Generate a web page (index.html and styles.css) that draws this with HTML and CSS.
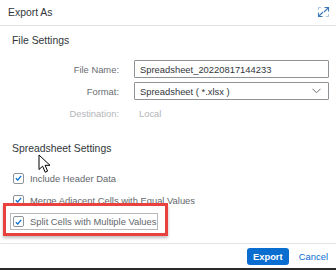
FILE: index.html
```html
<!DOCTYPE html>
<html>
<head>
<meta charset="utf-8">
<link rel="stylesheet" href="styles.css">
</head>
<body>
<div class="dialog">
  <header class="header">
    <span class="title">Export As</span>
    <svg class="expand" width="13" height="12" viewBox="0 0 13 12">
      <path d="M7.5 1.5H11.5V5.5M11.5 1.5L7 6M5.5 10.5H1.5V6.5M1.5 10.5L6 6" fill="none" stroke="#3d79b8" stroke-width="1.1"/>
      <path d="M1.5 4V1.5H4M11.5 8V10.5H9" fill="none" stroke="#3d79b8" stroke-width="0.8" opacity="0.5"/>
    </svg>
  </header>
  <main class="content">
    <h2 class="section">File Settings</h2>
    <div class="form">
      <label class="lbl">File Name:</label>
      <div class="input">Spreadsheet_20220817144233</div>
      <label class="lbl">Format:</label>
      <div class="input select">Spreadsheet ( *.xlsx )
        <svg class="chev" width="9" height="6" viewBox="0 0 9 6"><path d="M0.5 0.8L4.5 4.8L8.5 0.8" fill="none" stroke="#6a6d70" stroke-width="1"/></svg>
      </div>
      <label class="lbl disabled">Destination:</label>
      <div class="value disabled">Local</div>
    </div>
    <h2 class="section section2">Spreadsheet Settings</h2>
    <div class="checks">
      <div class="row"><span class="cb"><svg width="7" height="6" viewBox="0 0 7 6"><path d="M0.8 3.2L2.7 5L6.2 0.8" fill="none" stroke="#0a6ed1" stroke-width="1.2"/></svg></span><span>Include Header Data</span></div>
      <div class="row"><span class="cb"><svg width="7" height="6" viewBox="0 0 7 6"><path d="M0.8 3.2L2.7 5L6.2 0.8" fill="none" stroke="#0a6ed1" stroke-width="1.2"/></svg></span><span>Merge Adjacent Cells with Equal Values</span></div>
      <div class="row focus"><span class="cb"><svg width="7" height="6" viewBox="0 0 7 6"><path d="M0.8 3.2L2.7 5L6.2 0.8" fill="none" stroke="#0a6ed1" stroke-width="1.2"/></svg></span><span>Split Cells with Multiple Values</span></div>
    </div>
  </main>
  <footer class="footer">
    <button class="btn primary">Export</button>
    <button class="btn ghost">Cancel</button>
  </footer>
  <div class="highlight"></div>
  <svg class="cursor" width="14" height="20" viewBox="0 0 14 20">
    <path d="M1 1V15.5L4.6 12.2L7.2 18.2L9.6 17.1L7.1 11.3H12L1 1Z" fill="#fff" stroke="#000" stroke-width="1" stroke-linejoin="round"/>
  </svg>
</div>
</body>
</html>
```
FILE: styles.css
```css
* { box-sizing: border-box; }
html, body { margin: 0; padding: 0; background: #fff; }
body {
  width: 336px;
  height: 270px;
  overflow: hidden;
  font-family: "Liberation Sans", Arial, sans-serif;
  color: #32363a;
}
.dialog {
  position: relative;
  width: 336px;
  height: 270px;
  display: flex;
  flex-direction: column;
  border-bottom: 2px solid #2a2a2a;
}
.header {
  height: 26px;
  flex: none;
  display: flex;
  align-items: center;
  justify-content: space-between;
  padding: 0 6px 1px 8px;
  border-bottom: 1px solid #e2e2e2;
}
.title { font-size: 10.4px; color: #32363a; }
.expand { display: block; }
.content {
  flex: 1;
  padding: 0 7px 0 12px;
}
.section {
  margin: 0;
  font-weight: normal;
  font-size: 10.4px;
  line-height: 14px;
  color: #32363a;
}
.content > .section:first-child { margin-top: 8px; }
.form {
  margin-top: 12px;
  display: grid;
  grid-template-columns: 107px 195px;
  column-gap: 15px;
  row-gap: 4px;
  grid-auto-rows: 18px;
  font-size: 9.4px;
}
.lbl {
  text-align: right;
  align-self: center;
  color: #6a6d70;
}
.input {
  display: flex;
  align-items: center;
  justify-content: space-between;
  border: 1px solid #8e9398;
  border-radius: 1px;
  padding: 0 7px 0 5px;
  color: #32363a;
}
.value { align-self: center; padding-left: 5px; }
.disabled { color: #b3b5b7; }
.chev { display: block; }
.section2 { margin-top: 20px; }
.checks {
  margin-top: 11px;
  display: flex;
  flex-direction: column;
  font-size: 9.4px;
  color: #64676b;
}
.row {
  height: 22px;
  display: flex;
  align-items: center;
  gap: 6px;
  padding-left: 1px;
}
.row.focus {
  align-self: flex-start;
  height: 17px;
  margin: 2px 0 0 -2px;
  padding: 0 1px 0 2px;
  border: 1px solid #b8b8b8;
}
.cb {
  width: 11px;
  height: 11px;
  border: 1px solid #8e9398;
  border-radius: 2px;
  display: flex;
  align-items: center;
  justify-content: center;
  background: #fff;
}
.cb svg { display: block; }
.footer {
  height: 25px;
  flex: none;
  border-top: 1px solid #e4e4e4;
  display: flex;
  align-items: center;
  justify-content: flex-end;
  gap: 10px;
  padding: 0 8px 0 0;
}
.btn {
  font-family: "Liberation Sans", Arial, sans-serif;
  font-size: 9.4px;
  height: 17px;
  border: none;
  border-radius: 3px;
  padding: 0 5px;
  margin: 0;
  background: transparent;
}
.primary {
  background: #0a6ed1;
  color: #fff;
  font-weight: bold;
  width: 42px;
}
.ghost { color: #0a6ed1; padding: 0; }
.highlight {
  position: absolute;
  left: 3px;
  top: 203px;
  width: 165px;
  height: 33px;
  border: 3px solid #e8413e;
  box-shadow: 0 2px 3px rgba(0,0,0,0.25);
}
.cursor {
  position: absolute;
  left: 38px;
  top: 154px;
}
```
